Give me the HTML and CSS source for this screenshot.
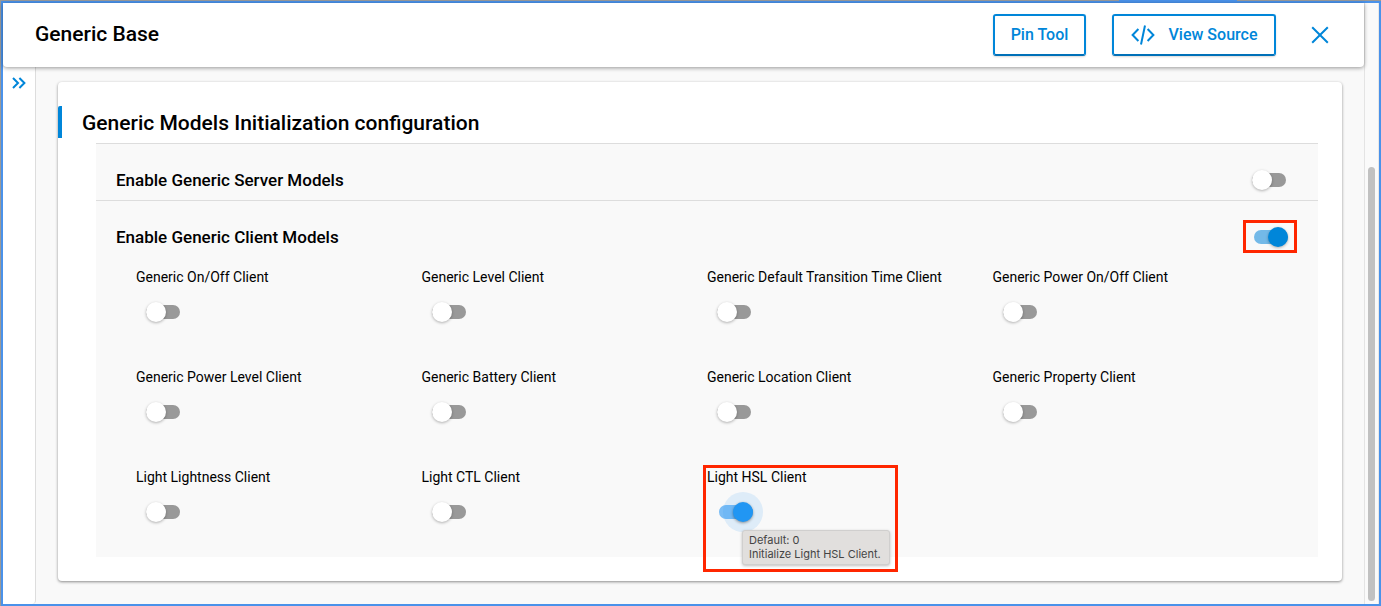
FILE: index.html
```html
<!DOCTYPE html>
<html lang="en">
<head>
<meta charset="utf-8">
<title>Generic Base</title>
<link rel="stylesheet" href="styles.css">
</head>
<body>
<div class="window">
  <div class="frame">
    <div class="page">
      <header class="header">
        <h1 class="header-title">Generic Base</h1>
        <button class="btn" type="button">Pin Tool</button>
        <button class="btn btn-source" type="button">
          <svg class="icon-code" viewBox="0 0 24 20" aria-hidden="true"><path d="M7.4 4L1.6 10L7.4 16M16.6 4L22.4 10L16.6 16M14 0.5L10 19.5"/></svg>
          View Source
        </button>
        <button class="close" type="button" aria-label="Close">
          <svg class="icon-close" viewBox="0 0 18 18" aria-hidden="true"><path d="M1.2 1.2L16.8 16.8M16.8 1.2L1.2 16.8"/></svg>
        </button>
      </header>
      <div class="body">
        <aside class="rail">
          <button class="expand" type="button" aria-label="Expand panel">
            <svg class="icon-chevrons" viewBox="0 0 14 12" aria-hidden="true"><path d="M1 1L6 6L1 11M7.4 1L12.4 6L7.4 11"/></svg>
          </button>
        </aside>
        <main class="content">
          <section class="card">
            <h2 class="card-title">Generic Models Initialization configuration</h2>
            <div class="panel">
              <div class="row row-line">
                <label class="row-label" for="server">Enable Generic Server Models</label>
                <input class="switch" type="checkbox" id="server">
              </div>
              <div class="row">
                <label class="row-label" for="client">Enable Generic Client Models</label>
                <span class="marked"><input class="switch" type="checkbox" id="client" checked></span>
              </div>
              <div class="grid">
                <div class="cell"><label class="cell-label" for="c1">Generic On/Off Client</label><div class="cell-control"><input class="switch" type="checkbox" id="c1"></div></div>
                <div class="cell"><label class="cell-label" for="c2">Generic Level Client</label><div class="cell-control"><input class="switch" type="checkbox" id="c2"></div></div>
                <div class="cell"><label class="cell-label" for="c3">Generic Default Transition Time Client</label><div class="cell-control"><input class="switch" type="checkbox" id="c3"></div></div>
                <div class="cell"><label class="cell-label" for="c4">Generic Power On/Off Client</label><div class="cell-control"><input class="switch" type="checkbox" id="c4"></div></div>
                <div class="cell"><label class="cell-label" for="c5">Generic Power Level Client</label><div class="cell-control"><input class="switch" type="checkbox" id="c5"></div></div>
                <div class="cell"><label class="cell-label" for="c6">Generic Battery Client</label><div class="cell-control"><input class="switch" type="checkbox" id="c6"></div></div>
                <div class="cell"><label class="cell-label" for="c7">Generic Location Client</label><div class="cell-control"><input class="switch" type="checkbox" id="c7"></div></div>
                <div class="cell"><label class="cell-label" for="c8">Generic Property Client</label><div class="cell-control"><input class="switch" type="checkbox" id="c8"></div></div>
                <div class="cell"><label class="cell-label" for="c9">Light Lightness Client</label><div class="cell-control"><input class="switch" type="checkbox" id="c9"></div></div>
                <div class="cell"><label class="cell-label" for="c10">Light CTL Client</label><div class="cell-control"><input class="switch" type="checkbox" id="c10"></div></div>
                <div class="cell cell-marked">
                  <label class="cell-label" for="c11">Light HSL Client</label>
                  <div class="cell-control"><input class="switch switch-active" type="checkbox" id="c11" aria-describedby="tip" checked></div>
                  <div class="tooltip" role="tooltip" id="tip">Default: 0<br>Initialize Light HSL Client.</div>
                </div>
              </div>
            </div>
          </section>
        </main>
      </div>
    </div>
    <div class="scrollbar"><div class="thumb"></div></div>
  </div>
</div>
</body>
</html>
```
FILE: styles.css
```css
*,
*::before,
*::after {
  box-sizing: border-box;
}

body {
  margin: 0;
  font-family: Roboto, "Liberation Sans", sans-serif;
  color: #000;
}

.window {
  display: flex;
  min-height: 100vh;
  padding: 1px 0 0 1px;
  background: linear-gradient(90deg, #999 81%, #4a92ea 81%, #4a92ea 89.6%, #999 89.6%);
}

.frame {
  flex: 1;
  display: flex;
  border: 2px solid #4a92ea;
  background: #f9f9f9;
}

.page {
  flex: 1;
  display: flex;
  flex-direction: column;
}

.header {
  position: relative;
  display: flex;
  align-items: center;
  height: 64px;
  padding: 0 26px 0 32px;
  background: #fff;
  border-radius: 0 0 4px 4px;
  box-shadow: 0 1px 4px rgba(0, 0, 0, 0.4);
}

.header-title {
  flex: 1;
  margin: 0;
  padding-bottom: 2px;
  font-size: 21px;
  line-height: 24px;
  font-weight: 500;
}

.btn {
  display: flex;
  align-items: center;
  justify-content: center;
  gap: 14px;
  height: 42px;
  min-width: 93px;
  margin-right: 26px;
  padding: 0 15px;
  border: 2px solid #0086d9;
  border-bottom-color: #0070b8;
  border-radius: 3px;
  background: #fff;
  box-shadow: 0 1px 2px rgba(0, 0, 0, 0.15);
  color: #0086d9;
  font: 500 16px/20px Roboto, "Liberation Sans", sans-serif;
}

.btn-source {
  min-width: 164px;
}

.icon-code {
  width: 24px;
  height: 20px;
}

.close {
  display: flex;
  padding: 9px;
  border: 0;
  background: none;
}

.icon-close {
  width: 18px;
  height: 18px;
}

.icon-code,
.icon-close,
.icon-chevrons {
  fill: none;
  stroke: #0086d9;
  stroke-width: 2;
}

.body {
  flex: 1;
  display: flex;
}

.rail {
  width: 33px;
  background: #fff;
  border-right: 1px solid #ddd;
  border-radius: 0 0 4px 0;
}

.expand {
  display: flex;
  padding: 10px 9px;
  border: 0;
  background: none;
}

.icon-chevrons {
  width: 14px;
  height: 12px;
}

.content {
  flex: 1;
  padding: 15px 22px 23px;
}

.card {
  padding: 24px 24px 24px 0;
  background: #fff;
  border-radius: 4px;
  box-shadow: 0 1px 3px rgba(0, 0, 0, 0.45);
}

.card-title {
  margin: 0 0 5px;
  padding: 2px 0 0 20px;
  border-left: 4px solid #0086d9;
  border-top-left-radius: 2px;
  font-size: 21px;
  line-height: 30px;
  font-weight: 500;
}

.panel {
  margin-left: 38px;
  border-top: 1px solid #ddd;
  background: #f9f9f9;
}

.row {
  display: flex;
  align-items: center;
  justify-content: space-between;
  padding: 16px 30px 0 20px;
}

.row-line {
  border-bottom: 1px solid #ddd;
}

.row-label {
  font-size: 17px;
  line-height: 40px;
  font-weight: 500;
}

.grid {
  display: grid;
  grid-template-columns: repeat(4, 1fr);
  padding: 0 40px;
}

.cell {
  height: 100px;
}

.cell-label {
  display: block;
  font-size: 14px;
  line-height: 40px;
}

.cell-control {
  display: flex;
  align-items: center;
  height: 30px;
  padding-left: 10px;
}

.switch {
  appearance: none;
  display: block;
  position: relative;
  width: 36px;
  height: 20px;
  margin: 0;
}

.switch::before {
  content: "";
  position: absolute;
  top: 3px;
  left: 0;
  width: 34px;
  height: 14px;
  border-radius: 7px;
  background: #999;
}

.switch::after {
  content: "";
  position: absolute;
  top: 0;
  left: 0;
  width: 20px;
  height: 20px;
  border-radius: 50%;
  background: #fff;
  box-shadow: 0 1px 3px rgba(0, 0, 0, 0.3);
}

.switch:checked::before {
  left: 2px;
  background: #73b9e8;
}

.switch:checked::after {
  left: 16px;
  background: #0086d9;
}

.switch-active:checked::before {
  background: #7bbdf5;
}

.switch-active:checked::after {
  background: #2196f3;
  box-shadow: 0 1px 3px rgba(0, 0, 0, 0.4), 0 0 0 10px rgba(33, 150, 243, 0.12);
}

.marked,
.cell-marked {
  position: relative;
}

.marked::after,
.cell-marked::after {
  content: "";
  position: absolute;
  border: 3px solid #ff2600;
  pointer-events: none;
}

.marked::after {
  inset: -7px -9px -6px;
}

.cell-marked::after {
  top: 8px;
  left: -4px;
  width: 195px;
  height: 107px;
}

.tooltip {
  position: absolute;
  top: 73px;
  left: 35px;
  padding: 2px 8px 3px 6px;
  border: 1px solid #d0cfce;
  border-radius: 3px;
  background: #e1dfdd;
  box-shadow: 0 1px 3px rgba(0, 0, 0, 0.25);
  color: #444;
  font: 11px/14px Inter, "Liberation Sans", sans-serif;
  white-space: nowrap;
}

.scrollbar {
  width: 15px;
  padding: 164px 3px 3px;
  display: flex;
  border-left: 1px solid #e4e4e4;
  border-right: 1px solid #e8e8e8;
  background: #fafafa;
}

.thumb {
  flex: 1;
  border-radius: 4px;
  background: #c1c1c1;
}
```
